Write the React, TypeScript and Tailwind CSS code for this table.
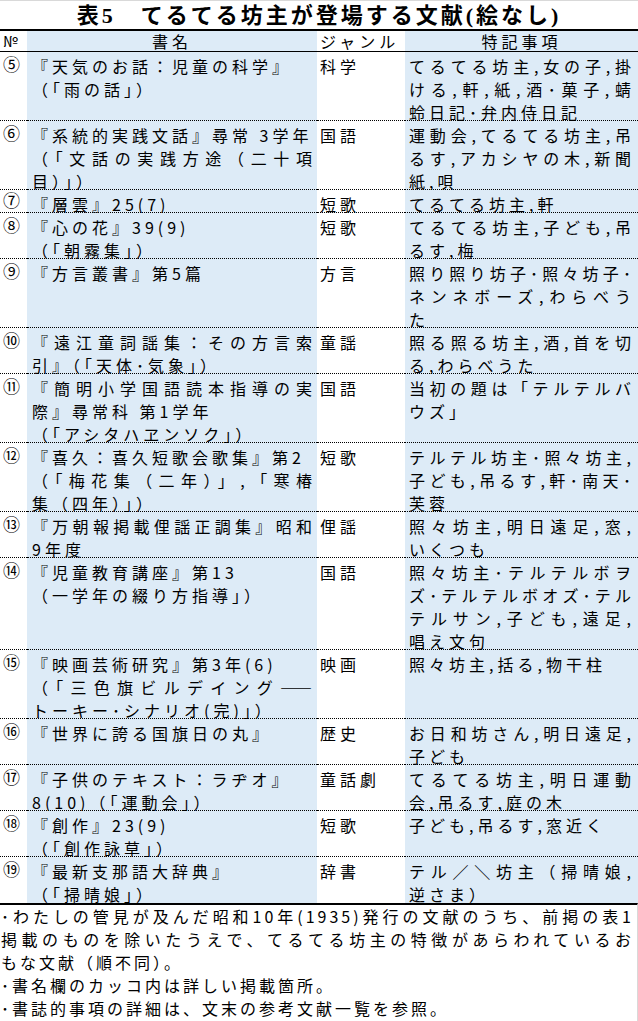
import React from 'react';

type Line = { t: string; j?: boolean };

const n = (t: string): Line => ({ t });
const j = (t: string): Line => ({ t, j: true });

interface Row {
  no: string;
  h: string;
  title: Line[];
  genre: string;
  note: Line[];
}

const rows: Row[] = [
  { no: '⑤', h: 'h-[69px]', title: [n('『天気のお話：児童の科学』'), n('（「雨の話」）')], genre: '科学', note: [j('てるてる坊主,女の子,掛'), j('ける,軒,紙,酒･菓子,蜻'), n('蛉日記･弁内侍日記')] },
  { no: '⑥', h: 'h-[69px]', title: [n('『系統的実践文話』尋常 3学年'), j('（「文話の実践方途（二十項'), n('目）」）')], genre: '国語', note: [j('運動会,てるてる坊主,吊'), j('るす,アカシヤの木,新聞'), n('紙,唄')] },
  { no: '⑦', h: 'h-[23px]', title: [n('『層雲』25(7)')], genre: '短歌', note: [n('てるてる坊主,軒')] },
  { no: '⑧', h: 'h-[46px]', title: [n('『心の花』39(9)'), n('（「朝霧集」）')], genre: '短歌', note: [j('てるてる坊主,子ども,吊'), n('るす,梅')] },
  { no: '⑨', h: 'h-[69px]', title: [n('『方言叢書』第5篇')], genre: '方言', note: [j('照り照り坊子･照々坊子･'), j('ネンネボーズ,わらべう'), n('た')] },
  { no: '⑩', h: 'h-[46px]', title: [j('『遠江童詞謡集：その方言索'), n('引』（「天体･気象」）')], genre: '童謡', note: [j('照る照る坊主,酒,首を切'), n('る,わらべうた')] },
  { no: '⑪', h: 'h-[69px]', title: [j('『簡明小学国語読本指導の実'), n('際』尋常科 第1学年'), n('（「アシタハヱンソク」）')], genre: '国語', note: [j('当初の題は「テルテルバ'), n('ウズ」')] },
  { no: '⑫', h: 'h-[69px]', title: [n('『喜久：喜久短歌会歌集』第2'), j('（「梅花集（二年）」,「寒椿'), n('集（四年）」）')], genre: '短歌', note: [j('テルテル坊主･照々坊主,'), j('子ども,吊るす,軒･南天･'), n('芙蓉')] },
  { no: '⑬', h: 'h-[46px]', title: [j('『万朝報掲載俚謡正調集』昭和'), n('9年度')], genre: '俚謡', note: [j('照々坊主,明日遠足,窓,'), n('いくつも')] },
  { no: '⑭', h: 'h-[92px]', title: [n('『児童教育講座』第13'), n('（一学年の綴り方指導」）')], genre: '国語', note: [j('照々坊主･テルテルボヲ'), j('ズ･テルテルボオズ･テル'), j('テルサン,子ども,遠足,'), n('唱え文句')] },
  { no: '⑮', h: 'h-[69px]', title: [n('『映画芸術研究』第3年(6)'), j('（「三色旗ビルデイング――'), n('トーキー･シナリオ(完)」）')], genre: '映画', note: [n('照々坊主,括る,物干柱')] },
  { no: '⑯', h: 'h-[46px]', title: [n('『世界に誇る国旗日の丸』')], genre: '歴史', note: [j('お日和坊さん,明日遠足,'), n('子ども')] },
  { no: '⑰', h: 'h-[46px]', title: [n('『子供のテキスト：ラヂオ』'), n('8(10)（「運動会」）')], genre: '童話劇', note: [j('てるてる坊主,明日運動'), n('会,吊るす,庭の木')] },
  { no: '⑱', h: 'h-[46px]', title: [n('『創作』23(9)'), n('（「創作詠草」）')], genre: '短歌', note: [n('子ども,吊るす,窓近く')] },
  { no: '⑲', h: 'h-[46px]', title: [n('『最新支那語大辞典』'), n('（「掃晴娘」）')], genre: '辞書', note: [j('テル／＼坊主（掃晴娘,'), n('逆さま）')] },
];

const notes: Line[] = [
  j('･わたしの管見が及んだ昭和10年(1935)発行の文献のうち、前掲の表1'),
  j('掲載のものを除いたうえで、てるてる坊主の特徴があらわれているお'),
  n('もな文献（順不同）。'),
  n('･書名欄のカッコ内は詳しい掲載箇所。'),
  n('･書誌的事項の詳細は、文末の参考文献一覧を参照。'),
];

function Lines({ lines }: { lines: Line[] }) {
  return (
    <>
      {lines.map((l, i) => (
        <div
          key={i}
          className={
            l.j
              ? 'whitespace-nowrap leading-[23px] [text-align-last:justify]'
              : 'whitespace-nowrap leading-[23px]'
          }
        >
          {l.t}
        </div>
      ))}
    </>
  );
}

export default function App() {
  return (
    <div className="w-[638px] h-[1021px] overflow-hidden bg-white text-black font-['Noto_Sans_CJK_JP',sans-serif] text-[16px] tracking-[4px]">
      {/* title */}
      <div className="h-[31px] border-t border-t-[#d9d9d9] border-b-2 border-b-black flex items-center justify-center font-['Liberation_Serif','Noto_Sans_CJK_JP',serif] font-bold text-[22px] tracking-[3px]">
        表5　てるてる坊主が登場する文献(絵なし)
      </div>

      {/* header */}
      <div className="grid grid-cols-[27px_290px_88px_233px] grid-rows-1 h-[21px] leading-[20px]">
        <div className="border-b border-black pl-[3px] tracking-normal text-[15px]">№</div>
        <div className="border-b border-black bg-[#ddebf7] text-center">書名</div>
        <div className="border-b border-black pl-[3px]">ジャンル</div>
        <div className="border-b border-black bg-[#ddebf7] text-center">特記事項</div>
      </div>

      {/* rows */}
      {rows.map((r, i) => {
        const last = i === rows.length - 1;
        const line = last ? '' : 'border-b border-dotted border-black';
        const noPad = r.h === 'h-[23px]' ? 'pt-0' : 'pt-[2px]';
        return (
          <div key={r.no} className={`grid grid-cols-[27px_290px_88px_233px] grid-rows-1 ${r.h}`}>
            <div className={`${line} ${noPad} pl-[3px] leading-[20px] tracking-normal text-[17px]`}>{r.no}</div>
            <div className={`${line} pt-[3px] bg-[#ddebf7] pl-[5px] pr-[1px]`}>
              <Lines lines={r.title} />
            </div>
            <div className={`${line} pt-[3px] pl-[3px] leading-[23px] whitespace-nowrap`}>{r.genre}</div>
            <div className={`${line} pt-[3px] bg-[#ddebf7] pl-[4px] pr-[3px]`}>
              <Lines lines={r.note} />
            </div>
          </div>
        );
      })}

      {/* notes */}
      <div className="border-t-2 border-black border-r border-r-[#d9d9d9] h-full pl-[1px] pr-[3px] tracking-[3px]">
        <Lines lines={notes} />
      </div>
    </div>
  );
}
